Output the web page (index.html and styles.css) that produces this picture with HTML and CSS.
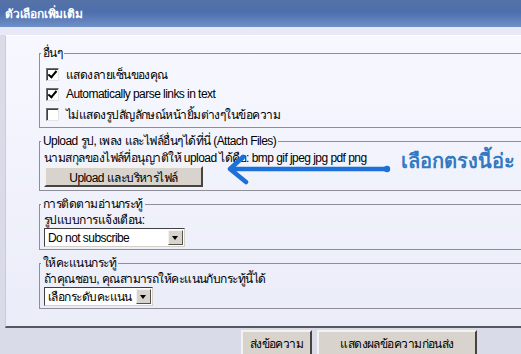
FILE: index.html
```html
<!DOCTYPE html>
<html>
<head>
	<title>ตัวเลือกเพิ่มเติม</title>
	<link rel="stylesheet" href="styles.css">
</head>
<body>
	<div class="page">
		<div class="titlebar">ตัวเลือกเพิ่มเติม</div>
		<div class="strip"></div>

		<div class="panel">
			<fieldset class="box">
				<legend>อื่นๆ</legend>
				<label class="check"><input type="checkbox" checked> แสดงลายเซ็นของคุณ</label>
				<label class="check"><input type="checkbox" checked> Automatically parse links in text</label>
				<label class="check"><input type="checkbox"> ไม่แสดงรูปสัญลักษณ์หน้ายิ้มต่างๆในข้อความ</label>
			</fieldset>

			<fieldset class="box upload">
				<legend>Upload รูป, เพลง และไฟล์อื่นๆได้ที่นี่ (Attach Files)</legend>
				<div class="line">นามสกุลของไฟล์ที่อนุญาติให้ upload ได้คือ: bmp gif jpeg jpg pdf png</div>
				<button type="button" class="btn btn-upload">Upload และบริหารไฟล์</button>

				<div class="note">
					<svg class="arrow" width="170" height="34" viewBox="0 0 170 34">
						<path d="M4 15 L160 15" stroke="#1d70d8" stroke-width="4.5" fill="none"/>
						<circle cx="161" cy="15" r="3.2" fill="#1d70d8"/>
						<path d="M17 3 L4 15 L20 28" stroke="#1d70d8" stroke-width="4.5" fill="none" stroke-linecap="round" stroke-linejoin="round"/>
					</svg>
					<span class="note-text">เลือกตรงนี้อ่ะ</span>
				</div>
			</fieldset>

			<fieldset class="box">
				<legend>การติดตามอ่านกระทู้</legend>
				<div class="line">รูปแบบการแจ้งเตือน:</div>
				<div class="select select-sub">
					<select>
						<option>Do not subscribe</option>
						<option>Instant notification by email</option>
					</select>
					<span class="drop"></span>
				</div>
			</fieldset>

			<fieldset class="box">
				<legend>ให้คะแนนกระทู้</legend>
				<div class="line">ถ้าคุณชอบ, คุณสามารถให้คะแนนกับกระทู้นี้ได้</div>
				<div class="select select-rate">
					<select>
						<option>เลือกระดับคะแนน</option>
						<option>5 ดีเยี่ยม</option>
					</select>
					<span class="drop"></span>
				</div>
			</fieldset>
		</div>

		<div class="actions">
			<button type="button" class="btn btn-send">ส่งข้อความ</button>
			<button type="button" class="btn btn-preview">แสดงผลข้อความก่อนส่ง</button>
		</div>
	</div>
</body>
</html>
```

FILE: styles.css
```css
html, body {
    margin: 0;
    overflow: hidden;
}

body {
    background-color: #d9dbe8;
    font-family: Tahoma, "Liberation Sans", "Noto Sans", sans-serif;
    font-size: 12px;
    letter-spacing: -0.55px;
    color: #000;
}

.page {
    width: 640px;
}

.titlebar {
    height: 27px;
    line-height: 28px;
    padding-left: 5px;
    color: #fff;
    font-weight: bold;
    font-size: 12px;
    letter-spacing: -0.2px;
    background: linear-gradient(#5572a6, #4d6fae 45%, #6f8fc6);
}

.strip {
    height: 8px;
    background-color: #e7e9f6;
}

.panel {
    margin-left: 5px;
    padding: 10px 0 17px 33px;
    border-left: 1px solid #c9cbdc;
    border-top: 1px solid #ffffff;
    border-bottom: 2px solid #55575f;
    background: linear-gradient(#f7f8ff, #eaecf8);
}

fieldset.box {
    margin: 6px 0 0 0;
    padding: 0 4px 2px 4px;
    border: 1px solid #8d8e96;
    position: relative;
}

fieldset.box:first-child {
    margin-top: 0;
    padding-bottom: 3px;
}

legend {
    height: 14px;
    padding: 0 2px;
    margin-left: -3px;
    line-height: 14px;
    overflow: visible;
}

.check {
    display: flex;
    align-items: center;
    height: 20px;
}

.check:first-of-type {
    margin-top: 4px;
}

.check input {
    appearance: none;
    position: relative;
    margin: 0 7px 0 2px;
    width: 13px;
    height: 13px;
    box-sizing: border-box;
    background-color: #fff;
    border: 1px solid;
    border-color: #707070 #e4e4e4 #e4e4e4 #707070;
    box-shadow: inset 1px 1px 0 #404040;
}

.check input:checked::after {
    content: "";
    position: absolute;
    left: 3px;
    top: 0px;
    width: 3px;
    height: 7px;
    border-right: 2px solid #000;
    border-bottom: 2px solid #000;
    transform: rotate(40deg);
}

.line {
    height: 14px;
    line-height: 14px;
    margin-top: 2px;
    white-space: nowrap;
}

.upload .line {
    margin-top: 3px;
}

.btn {
    font-family: inherit;
    font-size: 12px;
    letter-spacing: -0.55px;
    color: #000;
    background-color: #d8d4cd;
    border: 2px solid;
    border-color: #f4f2ee #45443f #45443f #f4f2ee;
    padding: 0;
}

.btn-upload {
    display: block;
    width: 159px;
    height: 21px;
    margin: 1px 0 1px 0;
}

.note {
    position: absolute;
    left: 186px;
    top: 6px;
    display: flex;
    align-items: flex-start;
}

.note-text {
    margin: -5px 0 0 5px;
    line-height: 24px;
    color: #3379c2;
    font-weight: bold;
    font-size: 20px;
    letter-spacing: 0;
    font-family: "Liberation Serif", serif;
    white-space: nowrap;
}

.select {
    position: relative;
    display: flex;
    height: 19px;
    margin: 1px 0 0 0;
}

.select select {
    appearance: none;
    height: 19px;
    box-sizing: border-box;
    border: 1px solid;
    border-color: #404040 #d4d0c8 #d4d0c8 #404040;
    border-radius: 0;
    background: #fff;
    font-family: inherit;
    font-size: 12px;
    letter-spacing: -0.55px;
    padding: 0 0 0 3px;
    color: #000;
}

.select-sub select {
    width: 141px;
}

.select-rate select {
    width: 109px;
}

.drop {
    position: absolute;
    top: 2px;
    width: 15px;
    height: 15px;
    box-sizing: border-box;
    background-color: #d8d4cd;
    border: 1px solid;
    border-color: #f4f2ee #55534e #55534e #f4f2ee;
}

.select-sub .drop {
    left: 124px;
}

.select-rate .drop {
    left: 92px;
}

.drop::after {
    content: "";
    position: absolute;
    left: 3px;
    top: 5px;
    border-left: 3.5px solid transparent;
    border-right: 3.5px solid transparent;
    border-top: 4px solid #000;
}

.actions {
    display: flex;
    gap: 5px;
    padding: 2px 0 0 241px;
}

.btn-send {
    width: 71px;
    height: 26px;
}

.btn-preview {
    width: 160px;
    height: 26px;
}
```
